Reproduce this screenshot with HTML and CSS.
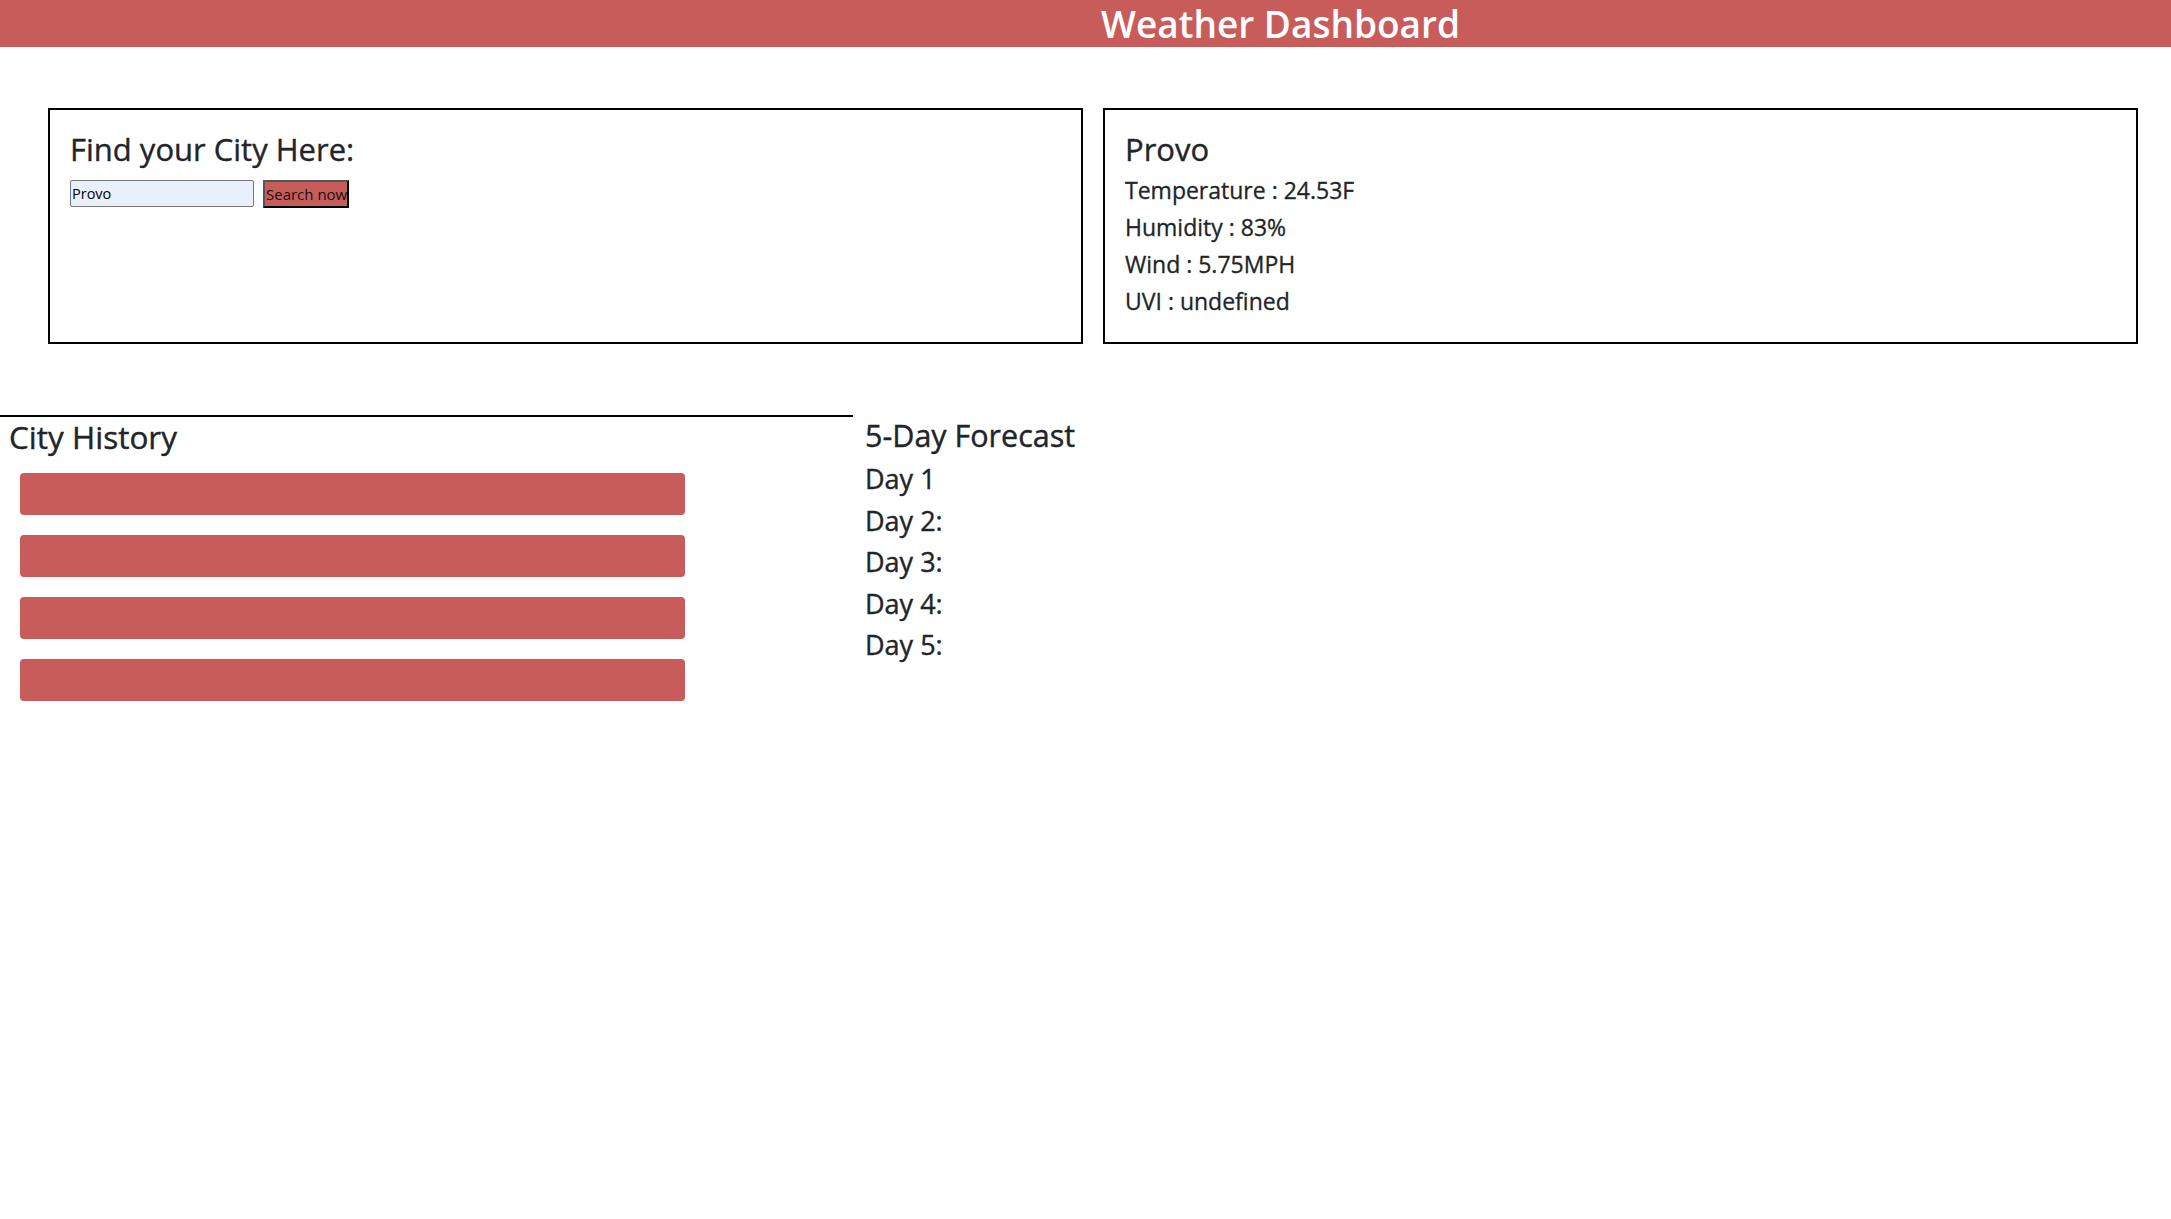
FILE: index.html
```html
<!DOCTYPE html>
<html lang="en">
<head>
<meta charset="utf-8">
<title>Weather Dashboard</title>
<link rel="stylesheet" href="styles.css">
</head>
<body>
<header class="topbar">
  <h1 class="topbar-title">Weather Dashboard</h1>
</header>
<section class="top-row">
  <div class="panel">
    <h2 class="panel-title">Find your City Here:</h2>
    <form class="search-form">
      <input class="search-input" type="text" value="Provo">
      <button class="search-btn" type="button">Search now</button>
    </form>
  </div>
  <div class="panel">
    <h2 class="panel-title">Provo</h2>
    <p class="info-line">Temperature : 24.53F</p>
    <p class="info-line">Humidity : 83%</p>
    <p class="info-line">Wind : 5.75MPH</p>
    <p class="info-line">UVI : undefined</p>
  </div>
</section>
<section class="bottom-row">
  <div class="history">
    <h3 class="history-title">City History</h3>
    <div class="history-list">
      <button class="history-btn" type="button"></button>
      <button class="history-btn" type="button"></button>
      <button class="history-btn" type="button"></button>
      <button class="history-btn" type="button"></button>
    </div>
  </div>
  <div class="forecast">
    <h3 class="forecast-title">5-Day Forecast</h3>
    <p class="day-line">Day 1</p>
    <p class="day-line">Day 2:</p>
    <p class="day-line">Day 3:</p>
    <p class="day-line">Day 4:</p>
    <p class="day-line">Day 5:</p>
  </div>
</section>
</body>
</html>
```
FILE: styles.css
```css
* { box-sizing: border-box; }
body {
  margin: 0;
  font-family: "Open Sans", "Noto Sans", sans-serif;
  color: #212529;
  background: #fff;
}
.topbar {
  background: #c85c5a;
  height: 47px;
  padding-left: 390px;
  text-align: center;
}
.topbar-title {
  margin: 0;
  color: #fff;
  font-size: 37px;
  font-weight: 600;
  line-height: 47px;
}
.top-row {
  display: grid;
  grid-template-columns: 1fr 1fr;
  gap: 20px;
  margin-top: 61px;
  padding: 0 33px 0 48px;
}
.panel {
  height: 236px;
  border: 2px solid #000;
  padding: 20px 20px 0 20px;
}
.panel-title {
  margin: 0;
  font-size: 31px;
  font-weight: 400;
  line-height: 38px;
  -webkit-text-stroke: 0.35px #212529;
}
.search-form {
  display: flex;
  gap: 9px;
  margin-top: 12px;
}
.search-input {
  width: 184px;
  height: 27px;
  border: 1px solid #767676;
  border-radius: 2px;
  background: #e8f0fe;
  font-family: "Open Sans", sans-serif;
  font-size: 14.5px;
  padding: 0 1px;
  color: #000;
}
.search-btn {
  width: 86px;
  height: 28px;
  border: 2px outset #555;
  background: #c85c5a;
  font-family: "Open Sans", sans-serif;
  font-size: 15px;
  line-height: 24px;
  padding: 0 1px;
  color: #111;
  white-space: nowrap;
  overflow: hidden;
}
.info-line {
  margin: 0;
  font-size: 23px;
  line-height: 37px;
  -webkit-text-stroke: 0.3px #212529;
}
.panel-title + .info-line { margin-top: 4px; }
.bottom-row {
  display: flex;
  margin-top: 71px;
}
.history {
  width: 853px;
  border-top: 2px solid #000;
  padding-left: 9px;
}
.history-title {
  margin: 2px 0 0 0;
  font-size: 31.5px;
  font-weight: 400;
  line-height: 36px;
  -webkit-text-stroke: 0.4px #212529;
}
.history-list {
  display: flex;
  flex-direction: column;
  gap: 20px;
  margin-top: 18px;
  padding-left: 11px;
}
.history-btn {
  width: 665px;
  height: 42px;
  border: 0;
  border-radius: 4px;
  background: #c75c5a;
}
.forecast {
  padding-left: 12px;
  padding-top: 2px;
}
.forecast-title {
  margin: 0;
  font-size: 30.5px;
  font-weight: 400;
  line-height: 37px;
  -webkit-text-stroke: 0.4px #212529;
}
.day-line {
  margin: 0;
  font-size: 27px;
  font-weight: 400;
  line-height: 41.5px;
  -webkit-text-stroke: 0.4px #212529;
}
.forecast-title + .day-line { margin-top: 4px; }
```
